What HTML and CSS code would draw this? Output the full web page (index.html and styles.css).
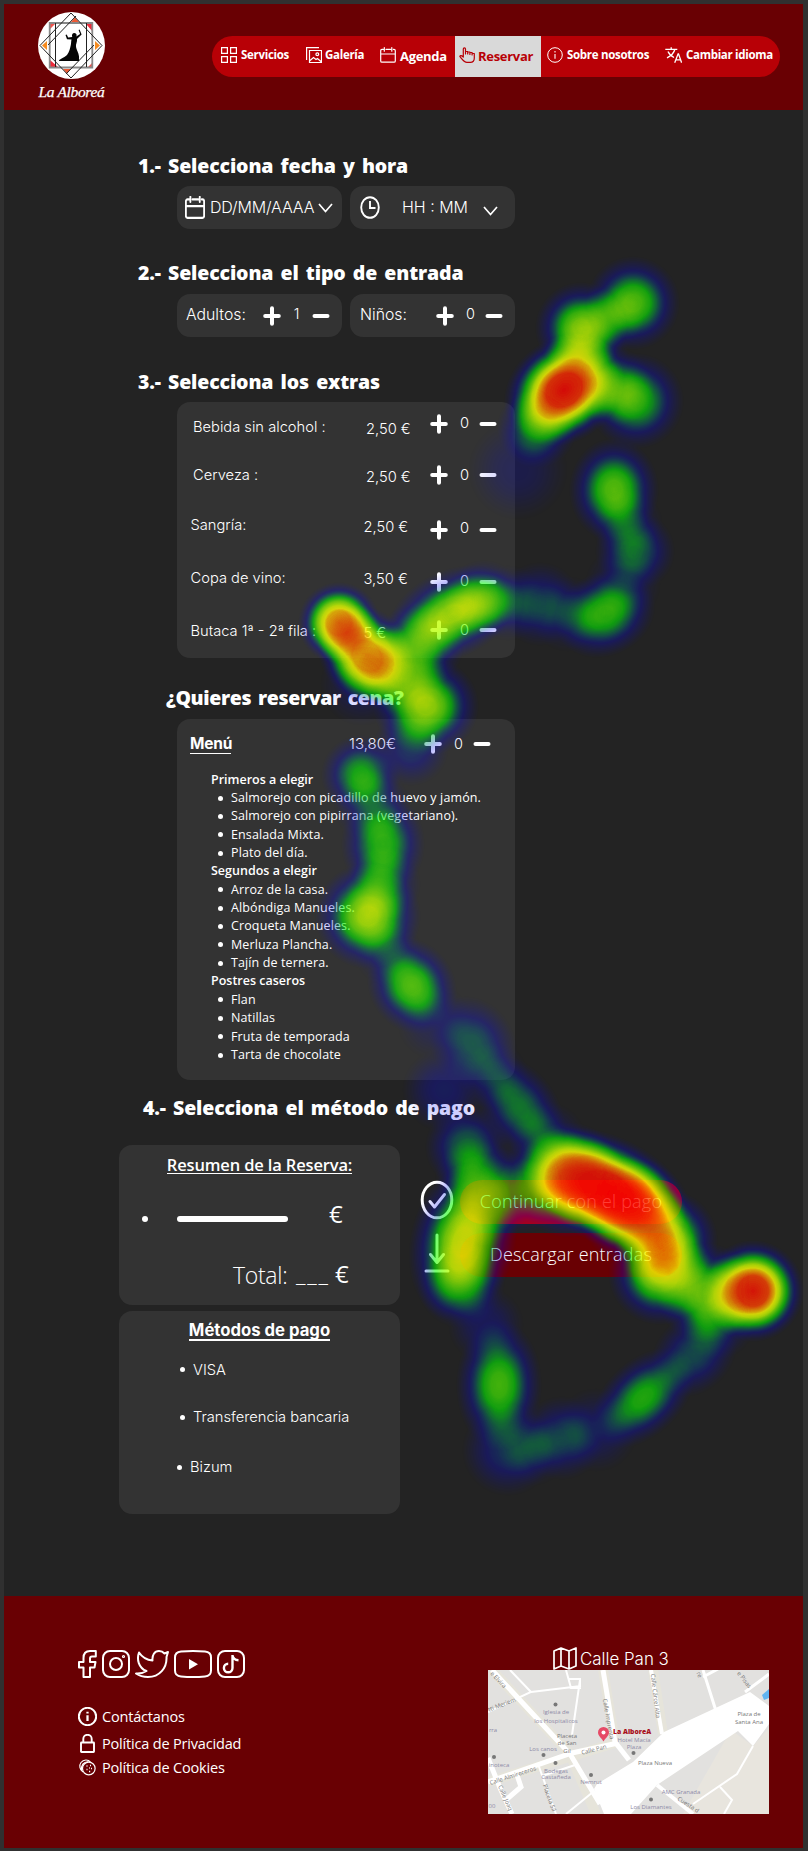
FILE: index.html
```html
<!DOCTYPE html>
<html lang="es">
<head>
<meta charset="utf-8">
<title>La Alboreá - Reservar</title>
<link rel="stylesheet" href="styles.css">
</head>
<body>
<svg class="defs" width="0" height="0">
  <symbol id="plus" viewBox="0 0 18 20"><path d="M9 2.200v15.600M2.200 10h13.600" stroke="#fff" stroke-width="4" stroke-linecap="round"/></symbol>
  <symbol id="minus" viewBox="0 0 18 20"><path d="M2.500 10h13" stroke="#fff" stroke-width="4" stroke-linecap="round"/></symbol>
  <symbol id="calendar" viewBox="0 0 16 16" preserveAspectRatio="none"><path d="M3.200 2.400H2a1.300 1.300 0 0 0-1.300 1.300v10.200A1.300 1.300 0 0 0 2 15.200h12a1.300 1.300 0 0 0 1.300-1.300V3.700A1.300 1.300 0 0 0 14 2.400h-.6M6 2.400h4.600M4.300.600v3.600M11.800.600v3.600M.9 7h14.200" fill="none" stroke="currentColor" stroke-width="var(--cw,1.200)" stroke-linecap="round"/></symbol>
  <symbol id="info" viewBox="0 0 16 16"><circle cx="8" cy="8" r="7.300" fill="none" stroke="currentColor" stroke-width="var(--sw,1)"/><path d="M8 7v4.800M8 4v1.400" stroke="currentColor" stroke-width="var(--iw,1.100)"/></symbol>
</svg>
<div class="page">
  <header class="header">
    <a class="brand">
      <svg width="67" height="67" viewBox="0 0 67 67">
        <circle cx="33.500" cy="33.500" r="33.500" fill="#fff"/>
        <path d="M48 12h7v8zM12 48v7h8z" fill="#ee2b3b"/><path d="M12 12h5l-5 5zM55 55h-5l5-5z" fill="#f0524d"/>
        <path d="M9 29v9l-5-4.500zM57 29v9l5-4.500z" fill="#f68b1f"/>
        <path d="M33 10h8l-4-4.500zM25 57h8l-4 4.500z" fill="#ee5a34"/>
        <path d="M11.700 11h42.600v44.500H11.700z" fill="none" stroke="#888" stroke-width="1.800"/>
        <path d="M17.500 11v44M48.500 11v44" stroke="#222" stroke-width="1"/>
        <path d="M33 1L2 33.500l31 32.500L64 33.500zM38 4L10 33M56 33L28 62" fill="none" stroke="#222" stroke-width="1"/>
        <path d="M36.500 21c2 .3 2.600 2 1.800 3.600l3.800-2.600-1.500-4 1-.5 2 5-4.600 4.500c.5 3-1.500 5-1 7.500.5 4 2.500 5.500 3 10 .2 2-.2 3 .2 4.500H21c-.5-1.500 5-3 8-6 2.500-3 3-7 3.800-10 .5-2 .2-3.500.7-5.500l-4.500-.3-1.500-4.200 1.200-.6 1.500 3 4-.4c-.6-1.800 0-4 2.300-4z" fill="#050505"/>
      </svg>
      <span class="brand-name">La Alboreá</span>
    </a>
    <nav class="nav">
      <a class="nav-item servicios"><svg width="16" height="16" viewBox="0 0 16 16" fill="none" stroke="currentColor" stroke-width="1.200"><path d="M.6.600h5.800v5.800H.600zM9.600.600h5.800v5.800H9.600zM.600 9.600h5.800v5.800H.600zM9.600 9.600h5.800v5.800H9.600z"/></svg><span>Servicios</span></a>
      <a class="nav-item galeria"><svg width="16" height="16" viewBox="0 0 16 16" fill="none" stroke="currentColor" stroke-width="1.200"><path d="M3.500 3.500h12v12h-12zM.6 13V.6H13M3.500 14l4-3.500 2.500 2 1.500-1 4 3.500"/><circle cx="11.300" cy="7.200" r="1.400"/></svg><span>Galería</span></a>
      <a class="nav-item agenda"><svg width="16" height="16"><use href="#calendar"/></svg><span>Agenda</span></a>
      <a class="nav-item active"><svg width="16" height="16" viewBox="0 0 16 16" fill="none" stroke="currentColor" stroke-width="1.200" stroke-linejoin="round" stroke-linecap="round"><path d="M4.300 10V1.900a1.100 1.100 0 0 1 2.200 0V5.500M6.500 7V4.500h2.200V7M8.700 5h2.200v2.500M10.900 5.500h2.200V8M13.100 6.500h2.200V11c0 2.500-1.500 4.400-4 4.400H8c-3 0-5-3.500-7.200-6 .5-1.300 2-1 3.500.6"/></svg><span>Reservar</span></a>
      <a class="nav-item sobre"><svg width="16" height="16"><use href="#info"/></svg><span>Sobre nosotros</span></a>
      <a class="nav-item idioma"><svg width="17" height="16" viewBox="0 0 17 16" fill="none" stroke="currentColor" stroke-width="1.300"><path d="M.3 2.300h12M6.200.3v2M9.800 2.500C9 6 5.500 9 2 10.800M3 4.500c1 2.500 3.500 4.600 6 6M9.700 15.700l3.400-8.900h.4l3.100 8.900M10.900 12.800h4.700"/></svg><span>Cambiar idioma</span></a>
    </nav>
  </header>

  <main class="main">
    <h2 class="h h1">1.- Selecciona fecha y hora</h2>
    <div class="pills">
      <div class="pill date">
        <svg class="cal" width="20" height="23"><use href="#calendar"/></svg>
        <span class="date-text">DD/MM/AAAA</span>
        <svg width="15" height="10" viewBox="0 0 15 10" fill="none" stroke="#fff" stroke-width="1.700"><path d="M1 1l6.500 7.500L14 1"/></svg>
      </div>
      <div class="pill time">
        <svg width="20" height="23" viewBox="0 0 20 23" fill="none" stroke="#fff" stroke-width="1.900"><ellipse cx="10" cy="11.500" rx="8.800" ry="10.300"/><path d="M10 5v7h5.500"/></svg>
        <span class="time-text">HH : MM</span>
        <svg class="chev-time" width="15" height="10" viewBox="0 0 15 10" fill="none" stroke="#fff" stroke-width="1.700"><path d="M1 1l6.500 7.500L14 1"/></svg>
      </div>
    </div>

    <h2 class="h h2">2.- Selecciona el tipo de entrada</h2>
    <div class="pills">
      <div class="pill adults"><span class="who">Adultos:</span><svg class="ic"><use href="#plus"/></svg><span class="n">1</span><svg class="ic"><use href="#minus"/></svg></div>
      <div class="pill kids"><span class="who">Niños:</span><svg class="ic"><use href="#plus"/></svg><span class="n">0</span><svg class="ic"><use href="#minus"/></svg></div>
    </div>

    <h2 class="h h3">3.- Selecciona los extras</h2>
    <section class="card extras">
      <div class="row r1"><span class="label">Bebida sin alcohol :</span><span class="price">2,50 €</span><svg class="ic"><use href="#plus"/></svg><span class="count">0</span><svg class="ic"><use href="#minus"/></svg></div>
      <div class="row r2"><span class="label">Cerveza :</span><span class="price">2,50 €</span><svg class="ic"><use href="#plus"/></svg><span class="count">0</span><svg class="ic"><use href="#minus"/></svg></div>
      <div class="row r3"><span class="label">Sangría:</span><span class="price">2,50 €</span><svg class="ic"><use href="#plus"/></svg><span class="count">0</span><svg class="ic"><use href="#minus"/></svg></div>
      <div class="row r4"><span class="label">Copa de vino:</span><span class="price">3,50 €</span><svg class="ic"><use href="#plus"/></svg><span class="count">0</span><svg class="ic"><use href="#minus"/></svg></div>
      <div class="row r5"><span class="label">Butaca 1ª - 2ª fila :</span><span class="price">5 €</span><svg class="ic"><use href="#plus"/></svg><span class="count">0</span><svg class="ic"><use href="#minus"/></svg></div>
    </section>

    <h2 class="h h4">¿Quieres reservar cena?</h2>
    <section class="card menu">
      <div class="menu-head"><span class="menu-title">Menú</span><span class="menu-price">13,80€</span><svg class="ic"><use href="#plus"/></svg><span class="n">0</span><svg class="ic"><use href="#minus"/></svg></div>
      <h3>Primeros a elegir</h3>
      <ul><li>Salmorejo con picadillo de huevo y jamón.</li><li>Salmorejo con pipirrana (vegetariano).</li><li>Ensalada Mixta.</li><li>Plato del día.</li></ul>
      <h3>Segundos a elegir</h3>
      <ul><li>Arroz de la casa.</li><li>Albóndiga Manueles.</li><li>Croqueta Manueles.</li><li>Merluza Plancha.</li><li>Tajín de ternera.</li></ul>
      <h3>Postres caseros</h3>
      <ul><li>Flan</li><li>Natillas</li><li>Fruta de temporada</li><li>Tarta de chocolate</li></ul>
    </section>

    <h2 class="h h5">4.- Selecciona el método de pago</h2>
    <div class="checkout">
      <div class="left">
        <section class="card summary">
          <h3><span>Resumen de la Reserva:</span></h3>
          <div class="line"><i class="dot"></i><i class="bar"></i><span class="euro">€</span></div>
          <div class="total"><span class="total-label">Total:</span><span class="blank">___</span><span class="euro">€</span></div>
        </section>
        <section class="card methods">
          <h3><span>Métodos de pago</span></h3>
          <ul><li>VISA</li><li>Transferencia bancaria</li><li class="bizum">Bizum</li></ul>
        </section>
      </div>
      <div class="actions">
        <div class="action"><svg width="34" height="40" viewBox="0 0 34 40" fill="none" stroke="#fff" stroke-width="3" stroke-linecap="round" stroke-linejoin="round"><ellipse cx="17" cy="20" rx="14.800" ry="17.800"/><path d="M10 21.500l4.500 5.500L24.500 14.500"/></svg><button class="btn pay">Continuar con el pago</button></div>
        <div class="action"><svg width="34" height="40" viewBox="0 0 34 40" fill="none" stroke="#fff" stroke-width="3" stroke-linecap="round" stroke-linejoin="round"><path d="M17 2v27M10.500 21.500L17 29.500l6.500-8M6 38h22"/></svg><button class="btn download">Descargar entradas</button></div>
      </div>
    </div>
  </main>

  <footer class="footer">
    <div class="foot-left">
      <div class="social">
        <svg width="19" height="28" viewBox="0 0 19 28" fill="none" stroke="#fff" stroke-width="2" stroke-linejoin="round"><path d="M5.500 27V17.500H1v-5.500h4.500V8c0-4.500 2.500-7 6.500-7h5.800v5.500H14c-1.500 0-2 .8-2 2V12h5.500l-1 5.500H12V27z"/></svg>
        <svg width="28" height="28" viewBox="0 0 28 28" fill="none" stroke="#fff" stroke-width="2"><rect x="1" y="1" width="26" height="26" rx="7"/><circle cx="14" cy="14" r="6"/><circle cx="21.500" cy="6.500" r=".6"/></svg>
        <svg width="34" height="28" viewBox="0 0 34 28" fill="none" stroke="#fff" stroke-width="2" stroke-linejoin="round"><path d="M4 2.500c3 4.500 7.500 7.500 13.500 8C17 5 19.500 1 24 1c2.500 0 4.200 1 5.500 2.500L33 2l-1.500 5c.5 11-7 20-18.500 20-4.500 0-8.500-1-12-3.500 4 .3 7.500-.5 10.500-2.500C3.500 18 1.500 9 4 2.500z"/></svg>
        <svg width="38" height="28" viewBox="0 0 38 28" fill="none" stroke="#fff" stroke-width="2"><path d="M7 1.500Q19 .5 31 1.500q6 .5 6 6v13q0 5.500-6 6-12 1-24 0-6-.5-6-6v-13q0-5.500 6-6z"/><path d="M15 9v10.500l9-5.250z" fill="#fff" stroke="none"/></svg>
        <svg width="28" height="28" viewBox="0 0 28 28" fill="none" stroke="#fff" stroke-width="2"><rect x="1" y="1" width="26" height="26" rx="7"/><path d="M15.500 5v13a4.300 4.300 0 1 1-4.300-4.300M15.500 5.500c.5 2.800 2.500 4.500 6 4.700" stroke-width="2.400"/></svg>
      </div>
      <a class="foot-link"><svg class="fi-info" width="19" height="19"><use href="#info"/></svg>Contáctanos</a>
      <a class="foot-link lock"><svg width="19" height="19" viewBox="0 0 19 19" fill="none" stroke="#fff" stroke-width="1.900"><rect x="3" y="8.500" width="13" height="9.500" rx=".5"/><path d="M5.300 8.500V5a4.200 4.200 0 0 1 8.400 0v3.500"/></svg>Política de Privacidad</a>
      <a class="foot-link cookie"><svg width="19" height="19" viewBox="0 0 19 19" fill="none" stroke="#fff" stroke-width="1.200"><circle cx="10.800" cy="10.500" r="6.300"/><path d="M5 14C1.500 12 1 7 3 4.500 5.500 1.500 10 1 12.500 4.200M3.500 12.500c-.5-5 2-8.500 7-9"/><path d="M8.500 8h1M12 7.500h1M13 10.500h1M8.500 11.500h1M11 13.500h1.200M11 10h.8" stroke-width="1.300"/></svg>Política de Cookies</a>
    </div>
    <div class="foot-right">
      <div class="address"><svg width="24" height="23" viewBox="0 0 24 23" fill="none" stroke="#fff" stroke-width="1.700" stroke-linejoin="round"><path d="M1 4l7-3 8 3 7-3v18l-7 3-8-3-7 3zM8 1v18M16 4v18"/></svg><span>Calle Pan 3</span></div>
      <svg class="map" width="281" height="144" viewBox="0 0 281 144">
        <rect width="281" height="144" fill="#e2e1df"/>
        <path d="M243 60l22 16 16-18v86H195z" fill="#e8e5de"/>
        <g fill="none" stroke="#e6e4da" stroke-width="10"><path d="M4 0l78 84 26 60M0 112l130-40M115 0l12 72M165 0l10 64"/></g>
        <path d="M176 62L262 22l19 14v18l-16 22-15-15-81 54-26 29h-27l-10-25 3-5 36-22z" fill="#fff"/>
        <g fill="none" stroke="#fff" stroke-width="4"><path d="M4 0l78 84 30 50" stroke-width="5"/><path d="M0 112l84-29 46-10" stroke-width="5"/><path d="M115 0l12 72 14 18" stroke-width="5"/><path d="M163 0l11 64" stroke-width="4"/><path d="M92 10l-8 55M78 0l5 18 9 0V9H81M43 22l50-6M0 42l43-20L22 0" stroke-width="2"/><path d="M215 0l13 41M215 7l15-8M257 22l24-18" stroke-width="3"/><path d="M0 88l12 30 12 26M29 105l4 12-14 12" stroke-width="5"/><path d="M50 94l18 50M54 106l36-12M78 144l27-22" stroke-width="2"/><path d="M169 115l36 29" stroke-width="4"/><path d="M265 76l-16 28-44 30M232 117l12 13-8 14" stroke-width="2"/></g>
        <path d="M274 25l7-6v9l-5 2z" fill="#62b4f0"/>
        <g fill="#777"><circle cx="67.500" cy="34.500" r="2"/><circle cx="55.500" cy="85" r="2"/><circle cx="67.500" cy="93" r="2"/><circle cx="103" cy="105" r="2"/><circle cx="6" cy="87" r="2"/><circle cx="145.500" cy="83" r="2"/><circle cx="163" cy="129.500" r="2"/></g>
        <g class="map-poi"><text x="68" y="44">Iglesia de</text><text x="68" y="53">los Hospitalicos</text><text x="55" y="81">Los canos</text><text x="68" y="103">Bodegas</text><text x="68" y="109">Castañeda</text><text x="103" y="114">Nemrut</text><text x="146" y="72">Hotel Macía</text><text x="146" y="79">Plaza</text><text x="193" y="124">AMC Granada</text><text x="163" y="139">Los Diamantes</text><text x="11" y="97">inoteca</text><text x="5" y="62">rra</text><text x="4" y="138">00</text></g>
        <g class="map-street"><text x="79" y="68">Placeta</text><text x="79" y="75">de San</text><text x="79" y="83">Gil</text><text x="167" y="95">Plaza Nueva</text><text x="261" y="46">Plaza de</text><text x="261" y="54">Santa Ana</text>
        <text transform="translate(10 10) rotate(47)">e Elvira</text><text transform="translate(14 35) rotate(-21)">tti Meriem</text><text transform="translate(120 49) rotate(80)">Calle Imprenta</text><text transform="translate(167 26) rotate(83)">Calle Cárcel Alta</text><text transform="translate(106 80) rotate(-14)">Calle Pan</text><text transform="translate(25 106) rotate(-18)">Calle Almireceros</text><text transform="translate(17 128) rotate(66)">Calle Joaq</text><text transform="translate(61 128) rotate(70)">Placeta Sil</text><text transform="translate(200 135) rotate(33)">Cuesta d</text><text transform="translate(256 10) rotate(52)">e Pisas</text><text transform="translate(211 5) rotate(70)">re</text></g>
        <path d="M115.500 57a5.500 5.500 0 0 1 5.500 5.500c0 3.500-4 6-5.500 9-1.500-3-5.500-5.500-5.500-9a5.500 5.500 0 0 1 5.500-5.500z" fill="#e64a66"/><circle cx="115.500" cy="62.500" r="2" fill="#fff"/>
        <text class="map-name" x="125" y="64">La AlboreA</text>
      </svg>
    </div>
  </footer>
</div>

<svg class="heat" width="808" height="1851" viewBox="0 0 808 1851">
  <defs>
    <radialGradient id="s"><stop offset="0" stop-opacity="1"/><stop offset=".18" stop-opacity=".97"/><stop offset=".35" stop-opacity=".86"/><stop offset=".5" stop-opacity=".68"/><stop offset=".65" stop-opacity=".44"/><stop offset=".79" stop-opacity=".23"/><stop offset=".92" stop-opacity=".07"/><stop offset="1" stop-opacity="0"/></radialGradient>
    <radialGradient id="k"><stop offset="0" stop-opacity="1"/><stop offset=".3" stop-opacity=".97"/><stop offset=".42" stop-opacity=".89"/><stop offset=".53" stop-opacity=".78"/><stop offset=".68" stop-opacity=".52"/><stop offset=".82" stop-opacity=".25"/><stop offset=".93" stop-opacity=".07"/><stop offset="1" stop-opacity="0"/></radialGradient>
    <filter id="ramp" filterUnits="userSpaceOnUse" x="0" y="0" width="808" height="1851" color-interpolation-filters="sRGB">
      <feColorMatrix in="SourceGraphic" values="0 0 0 1 0  0 0 0 1 0  0 0 0 1 0  0 0 0 0 1"/>
      <feComponentTransfer result="hue">
        <feFuncR type="table" tableValues="0 0 0 0 0 0 0 0 0 0 0 0 .167 .333 .5 .667 .833 1 1 1 1"/>
        <feFuncG type="table" tableValues="0 0 0 0 0 0 .167 .333 .5 .667 .833 1 1 1 1 1 1 1 .667 .333 0"/>
        <feFuncB type="table" tableValues="1 1 1 1 1 1 .833 .667 .5 .333 .167 0 0 0 0 0 0 0 0 0 0"/>
      </feComponentTransfer>
      <feComponentTransfer in="SourceGraphic" result="alpha"><feFuncA type="table" tableValues="0 .05 .1 .15 .2 .25 .3 .35 .4 .45 .5 .55 .6 .65 .7 .75 .8 .8 .8 .8 .8"/></feComponentTransfer>
      <feComposite in="hue" in2="alpha" operator="in"/>
    </filter>
  </defs>
  <g filter="url(#ramp)" fill="url(#s)">
    <circle cx="633" cy="303" r="47" opacity=".67"/><circle cx="610" cy="318" r="34" opacity=".25"/>
    <circle cx="581" cy="328" r="46" opacity=".73"/><circle cx="587" cy="358" r="42" opacity=".35"/>
    <ellipse cx="564" cy="390" rx="64" ry="52" fill="url(#k)" opacity=".998" transform="rotate(-36 564 390)"/>
    <circle cx="636" cy="401" r="48" opacity=".6"/><circle cx="614" cy="387" r="40" opacity=".4"/>
    <circle cx="537" cy="428" r="40" opacity=".5"/><circle cx="518" cy="470" r="50" opacity=".18"/>
    <ellipse cx="614" cy="490" rx="45" ry="52" opacity=".68"/><circle cx="635" cy="551" r="40" opacity=".45"/><circle cx="627" cy="524" r="36" opacity=".22"/><circle cx="623" cy="584" r="38" opacity=".2"/>
    <ellipse cx="605" cy="614" rx="52" ry="42" opacity=".61" transform="rotate(-25 605 614)"/>
    <circle cx="568" cy="614" r="38" opacity=".2"/><circle cx="540" cy="604" r="42" opacity=".35"/><circle cx="508" cy="603" r="38" opacity=".24"/>
    <ellipse cx="452" cy="614" rx="68" ry="44" opacity=".77" transform="rotate(-25 452 614)"/><circle cx="484" cy="600" r="40" opacity=".42"/><circle cx="420" cy="645" r="44" opacity=".5"/>
    <circle cx="339" cy="623" r="41" fill="url(#k)" opacity=".91"/><ellipse cx="367" cy="656" rx="56" ry="45" fill="url(#k)" opacity=".9" transform="rotate(50 367 656)"/>
    <circle cx="402" cy="672" r="46" opacity=".5"/><ellipse cx="426" cy="706" rx="53" ry="50" opacity=".77"/><circle cx="362" cy="684" r="42" opacity=".2"/>
    <circle cx="411" cy="748" r="38" opacity=".33"/><circle cx="361" cy="775" r="40" opacity=".57"/><circle cx="372" cy="806" r="38" opacity=".3"/>
    <ellipse cx="383" cy="844" rx="42" ry="52" opacity=".6"/><circle cx="383" cy="884" r="38" opacity=".35"/>
    <circle cx="368" cy="916" r="53" opacity=".79"/><circle cx="388" cy="952" r="34" opacity=".2"/>
    <ellipse cx="412" cy="986" rx="43" ry="50" opacity=".67" transform="rotate(-32 412 986)"/><circle cx="435" cy="1022" r="38" opacity=".15"/>
    <ellipse cx="473" cy="1044" rx="42" ry="50" opacity=".42" transform="rotate(-32 473 1044)"/>
    <ellipse cx="520" cy="1108" rx="38" ry="58" opacity=".49" transform="rotate(-35 520 1108)"/><circle cx="494" cy="1075" r="34" opacity=".2"/>
    <circle cx="444" cy="1090" r="42" opacity=".27"/><ellipse cx="467" cy="1147" rx="42" ry="42" opacity=".46"/><circle cx="475" cy="1177" r="40" opacity=".36"/><circle cx="548" cy="1140" r="38" opacity=".25"/>
    <ellipse cx="463" cy="1242" rx="53" ry="80" opacity=".83" transform="rotate(12 463 1242)"/><circle cx="486" cy="1200" r="46" opacity=".38"/><circle cx="461" cy="1284" r="44" opacity=".4"/>
    <circle cx="486" cy="1325" r="38" opacity=".24"/><ellipse cx="499" cy="1385" rx="43" ry="66" opacity=".65"/><circle cx="508" cy="1450" r="46" opacity=".34"/><circle cx="533" cy="1450" r="36" opacity=".2"/><circle cx="562" cy="1438" r="42" opacity=".36"/><circle cx="596" cy="1430" r="42" opacity=".22"/>
    <ellipse cx="643" cy="1398" rx="62" ry="38" opacity=".59" transform="rotate(-43 643 1398)"/><ellipse cx="694" cy="1354" rx="48" ry="38" opacity=".4" transform="rotate(-45 694 1354)"/>
    <circle cx="717" cy="1322" r="38" opacity=".3"/>
    <circle cx="753" cy="1291" r="51" fill="url(#k)" opacity=".99"/><circle cx="706" cy="1293" r="50" opacity=".67"/>
    <circle cx="660" cy="1273" r="52" opacity=".77"/><circle cx="666" cy="1241" r="52" opacity=".83"/>
    <ellipse cx="607" cy="1190" rx="92" ry="54" fill="url(#k)" opacity=".998" transform="rotate(26 607 1190)"/><circle cx="568" cy="1180" r="58" opacity=".85"/><circle cx="632" cy="1210" r="54" opacity=".85"/><circle cx="522" cy="1188" r="46" opacity=".42"/>
  </g>
</svg>
</body>
</html>
```
FILE: styles.css
```css
* { box-sizing: border-box; }
body { margin: 0; background: #303030; color: #fff; font-family: "Open Sans", "Noto Sans", sans-serif; }
h2, h3, ul { margin: 0; padding: 0; }
svg { display: block; flex: none; }
span { white-space: nowrap; }
.defs { position: absolute; }
.page { width: 808px; height: 1851px; padding: 4px 5px 3px 4px; display: flex; flex-direction: column; position: relative; }

.header { height: 106px; flex: none; background: #690003; display: flex; padding: 8px 23px 0 33px; justify-content: space-between; }
.brand { width: 69px; display: flex; flex-direction: column; align-items: center; }
.brand-name { font: italic 15.5px/20px "Liberation Serif", serif; letter-spacing: -.35px; margin-top: 3px; -webkit-text-stroke: .25px #fff; }
.nav { height: 41px; width: 568px; margin-top: 24px; background: #b80006; border-radius: 21px; display: flex; overflow: hidden; }
.nav-item { display: flex; padding-top: 11px; gap: 4px; font-size: 11.5px; font-weight: 700; line-height: 15px; letter-spacing: -.3px; flex: none; }
.servicios { width: 85px; margin-left: 9px; }
.galeria { width: 74px; }
.galeria span { margin-left: -1px; }
.agenda { width: 75px; font-size: 13px; }
.agenda span { padding-top: 2px; }
.active { width: 86px; background: #d9d9d9; color: #b80006; font-size: 13px; padding-left: 4px; gap: 3px; }
.active span { padding-top: 2px; }
.sobre { width: 118px; margin-left: 6px; }
.idioma { width: 110px; }

.main { height: 1486px; flex: none; background: #232323; padding-top: 42px; }
.h { font-size: 19.5px; font-weight: 800; line-height: 28px; white-space: nowrap; padding-left: 134px; letter-spacing: -.14px; word-spacing: 2.3px; }
.h1 { margin-bottom: 6px; }
.h2 { margin: 30px 0 7px; }
.h3 { margin: 31px 0 6px; }
.h4 { margin: 26px 0 7px; padding-left: 162px; letter-spacing: -.38px; }
.h5 { margin: 14px 0 23px; padding-left: 139px; }
.pills { display: flex; gap: 8px; padding-left: 173px; }
.pill { width: 165px; height: 43px; border-radius: 13px; background: #333; display: flex; align-items: center; font: 300 16px/20px Inter, sans-serif; }
.date { padding-left: 8px; gap: 5px; }
.date-text { width: 103px; padding-bottom: 1px; letter-spacing: -.15px; }
.cal { --cw: 1.5; }
.time { padding-left: 10px; }
.time-text { width: 65px; margin: 0 16px 1px 22px; }
.chev-time { margin-top: 6px; }
.ic { width: 18px; height: 20px; }
.n { width: 9px; text-align: center; font: 300 14.5px/20px Inter, sans-serif; }
.adults { padding-left: 9px; }
.adults .who { width: 77px; }
.adults .n { margin: 0 11px 4px 11px; }
.kids { padding-left: 10px; }
.kids .who { width: 76px; }
.kids .n { margin: 0 10px 3px 12px; }
.who { font-size: 15.8px; padding-bottom: 2px; }

.card { background: #333; border-radius: 13px; }
.extras { width: 338px; height: 256px; margin-left: 173px; }
.row { display: flex; height: 52px; padding-left: 16px; font: 300 14.7px/20px Inter, sans-serif; }
.row .label { width: 173px; padding-top: var(--l); }
.row .price { width: 64px; padding-top: var(--p); }
.row .count { width: 9px; margin: 0 10px 0 12px; padding-top: var(--c); }
.row .ic { margin-top: 12px; }
.r1 { --l: 15px; --p: 17px; --c: 11px; }
.r2 { --l: 11px; --p: 12.5px; --c: 11px; height: 54px; }
.r2 .ic { margin-top: 11px; }
.r3, .r4, .r5 { padding-left: 13.5px; }
.r3 .price, .r4 .price, .r5 .price { width: 66.5px; }
.r3 { --l: 7px; --p: 9px; --c: 10px; }
.r4 { --l: 7.5px; --p: 9px; --c: 11px; height: 48px; }
.r5 { --l: 13px; --p: 14.5px; --c: 12px; height: 48px; }

.menu { width: 338px; height: 361px; margin-left: 173px; padding: 15px 0 0 34px; }
.menu-head { display: flex; margin: 0 0 16.5px -21px; font: 300 15px/20px Inter, sans-serif; }
.menu-title { width: 41px; height: 20px; margin-right: 118px; font-weight: 700; font-size: 15.5px; line-height: 19px; border-bottom: 1px solid #fff; letter-spacing: -.2px; }
.menu-price { width: 75px; }
.menu-head .n { margin: 0 10px 0 12px; }
.menu h3 { font-size: 12.5px; font-weight: 600; line-height: 18.36px; letter-spacing: 0; }
.menu li { list-style: none; display: flex; align-items: center; gap: 8px; padding-left: 7px; font-size: 12.5px; line-height: 18.36px; letter-spacing: .12px; }
.menu li::before, .methods li::before { content: ""; width: 5px; height: 5px; border-radius: 50%; background: #fff; }

.checkout { display: flex; padding-left: 115px; gap: 20px; }
.left { display: flex; flex-direction: column; gap: 6px; }
.summary { width: 281px; height: 160px; padding-top: 9px; }
.summary h3, .methods h3 { display: flex; justify-content: center; }
.summary h3 span { font-size: 16.5px; font-weight: 600; line-height: 22px; height: 20px; border-bottom: 1px solid #fff; letter-spacing: -.15px; }
.line { display: flex; align-items: center; height: 30px; margin-top: 30px; padding-left: 23px; }
.dot { width: 6px; height: 6px; border-radius: 50%; background: #fff; }
.bar { width: 111px; height: 6px; border-radius: 3px; background: #fff; margin: 0 41px 0 29px; }
.euro { font: 400 24px/28px "Open Sans", sans-serif; margin-bottom: 11px; }
.total { display: flex; padding-left: 114px; margin-top: 26px; font-size: 23px; font-weight: 300; line-height: 30px; }
.total-label { width: 63px; letter-spacing: -.3px; }
.total .blank { width: 39px; letter-spacing: 1.8px; margin-top: -2px; }
.methods { width: 281px; height: 203px; padding-top: 9px; font-family: Inter, sans-serif; }
.methods h3 span { font-size: 16.7px; line-height: 20px; height: 21px; border-bottom: 2px solid #fff; font-weight: 700; }
.methods li { display: flex; align-items: center; gap: 8px; height: 20px; padding-left: 61px; font-weight: 300; font-size: 14.7px; margin-top: 27.5px; }
.methods h3 + ul li:first-child { margin-top: 18.5px; }
.methods .bizum { padding-left: 58px; margin-top: 30px; }
.actions { display: flex; flex-direction: column; gap: 9px; padding-top: 35px; }
.action { display: flex; align-items: center; gap: 6px; height: 44px; }
.action svg { margin-bottom: 4px; }
.btn { width: 222px; height: 44px; border: 0; border-radius: 22px; color: #fff; font: 300 18px/22px "Open Sans", sans-serif; letter-spacing: .2px; padding: 0 0 3px; white-space: nowrap; }
.pay { background: #b80006; }
.download { background: #690003; }

.footer { flex: 1; background: #690003; display: flex; justify-content: space-between; padding: 0 34px 0 74px; }
.social { display: flex; gap: 5px; padding-top: 54px; margin-bottom: 28px; }
.foot-link { display: flex; align-items: center; gap: 5px; height: 20px; font-size: 14.5px; letter-spacing: -.18px; }
.fi-info { --sw: 1.7; --iw: 1.9; }
.lock { margin-top: 7px; }
.cookie { margin-top: 4.5px; }
.foot-right { width: 281px; padding-top: 51px; }
.address { display: flex; gap: 3px; height: 23px; padding-left: 65px; font: 300 16.9px/25px Inter, sans-serif; }
.map-poi, .map-street { font: 6px "Open Sans", sans-serif; text-anchor: middle; fill: #8d8aa6; }
.map-street { fill: #777; }
.map-street text[transform] { dominant-baseline: middle; }
.map-name { font: 800 6.8px "Open Sans", sans-serif; fill: #a8101c; }
.heat { position: absolute; left: 0; top: 0; pointer-events: none; }
```
